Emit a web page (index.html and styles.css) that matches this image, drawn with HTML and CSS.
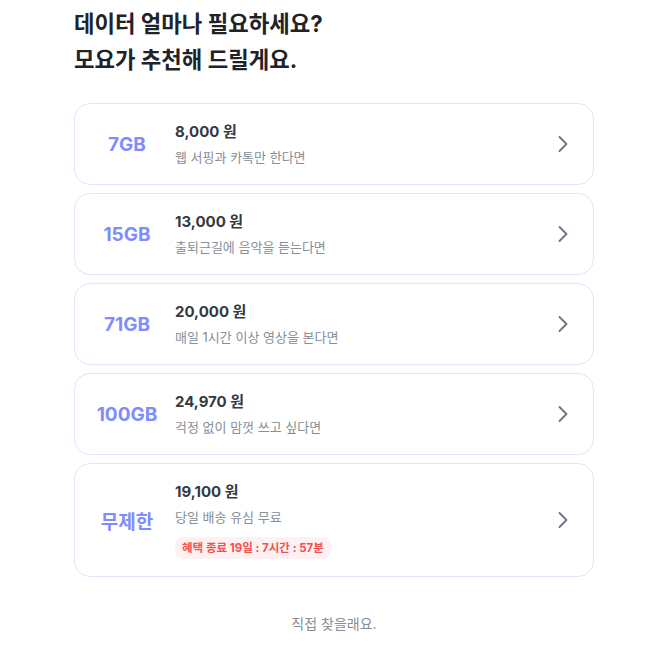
FILE: index.html
```html
<!DOCTYPE html>
<html lang="ko">
<head>
<meta charset="utf-8">
<link rel="stylesheet" href="styles.css">
</head>
<body>
<main class="page">
  <h1 class="title">데이터 얼마나 필요하세요?<br>모요가 추천해 드릴게요.</h1>
  <ul class="list">
    <li class="card">
      <div class="amount">7GB</div>
      <div class="info"><div class="price">8,000 원</div><div class="desc">웹 서핑과 카톡만 한다면</div></div>
      <svg class="chev" viewBox="0 0 20 20"><path d="M6.5 3 L13.5 10 L6.5 17"/></svg>
    </li>
    <li class="card">
      <div class="amount">15GB</div>
      <div class="info"><div class="price">13,000 원</div><div class="desc">출퇴근길에 음악을 듣는다면</div></div>
      <svg class="chev" viewBox="0 0 20 20"><path d="M6.5 3 L13.5 10 L6.5 17"/></svg>
    </li>
    <li class="card">
      <div class="amount">71GB</div>
      <div class="info"><div class="price">20,000 원</div><div class="desc">매일 1시간 이상 영상을 본다면</div></div>
      <svg class="chev" viewBox="0 0 20 20"><path d="M6.5 3 L13.5 10 L6.5 17"/></svg>
    </li>
    <li class="card">
      <div class="amount">100GB</div>
      <div class="info"><div class="price">24,970 원</div><div class="desc">걱정 없이 맘껏 쓰고 싶다면</div></div>
      <svg class="chev" viewBox="0 0 20 20"><path d="M6.5 3 L13.5 10 L6.5 17"/></svg>
    </li>
    <li class="card">
      <div class="amount">무제한</div>
      <div class="info"><div class="price">19,100 원</div><div class="desc">당일 배송 유심 무료</div><div class="badge">혜택 종료 19일 : 7시간 : 57분</div></div>
      <svg class="chev" viewBox="0 0 20 20"><path d="M6.5 3 L13.5 10 L6.5 17"/></svg>
    </li>
  </ul>
  <p class="more">직접 찾을래요.</p>
</main>
</body>
</html>
```
FILE: styles.css
```css
* { box-sizing: border-box; }
body {
  margin: 0;
  background: #fff;
  font-family: Inter, "Noto Sans CJK KR", sans-serif;
  color: #191f28;
}
.page {
  width: 520px;
  margin-left: 74px;
  padding-top: 6px;
}
.title {
  margin: 0 0 25px;
  font-size: 22.3px;
  line-height: 36px;
  font-weight: 700;
  color: #1f2329;
}
.list {
  list-style: none;
  margin: 0;
  padding: 0;
  display: flex;
  flex-direction: column;
  gap: 8px;
}
.card {
  display: flex;
  align-items: center;
  padding: 17px 20px 17px 19px;
  border: 1px solid #e1e5fc;
  border-radius: 16px;
  background: #fff;
}
.amount {
  width: 66px;
  margin-right: 15px;
  text-align: center;
  font-size: 19px;
  font-weight: 700;
  color: #7f8cff;
  white-space: nowrap;
}
.info {
  flex: 1;
  display: flex;
  flex-direction: column;
  align-items: flex-start;
}
.price {
  font-size: 15px;
  line-height: 22px;
  font-weight: 700;
  color: #333a42;
}
.desc {
  margin-top: 4px;
  font-size: 13px;
  line-height: 20px;
  color: #868e96;
}
.badge {
  margin-top: 10px;
  height: 22px;
  line-height: 22px;
  padding: 0 7px;
  border-radius: 8px;
  background: #fff1f1;
  color: #f1524f;
  font-size: 11.5px;
  font-weight: 700;
}
.chev {
  width: 20px;
  height: 20px;
  fill: none;
  stroke: #6b7280;
  stroke-width: 1.8;
  stroke-linecap: round;
  stroke-linejoin: round;
}
.more {
  margin: 37px 0 0;
  text-align: center;
  font-size: 14px;
  line-height: 20px;
  color: #868e96;
}
```
